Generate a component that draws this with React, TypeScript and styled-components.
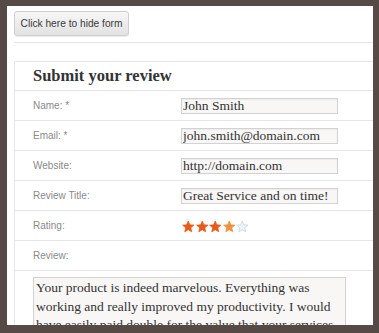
import React from "react";
import styled, { createGlobalStyle } from "styled-components";

const GlobalStyle = createGlobalStyle`
  html, body {
    margin: 0;
    padding: 0;
    background: #554a45;
  }
`;

const serif = `"Liberation Serif", Georgia, "Times New Roman", serif`;
const sans = `"Liberation Sans", Arial, Helvetica, sans-serif`;

const Frame = styled.div`
  margin: 6px 6px 8px 7px;
  height: 319px;
  background: #ffffff;
  overflow: hidden;
`;

const Content = styled.div`
  width: 420px;
  padding: 5px 0 0 7px;
`;

const ToggleButton = styled.button`
  display: block;
  width: 115px;
  height: 25px;
  padding: 0;
  white-space: nowrap;
  font-family: ${sans};
  font-size: 10.2px;
  color: #3a3a3a;
  background: linear-gradient(to bottom, #f7f7f7, #e2e2e2);
  border: 1px solid #cfcfcf;
  border-radius: 3px;
  box-shadow: 0 1px 1px rgba(0, 0, 0, 0.08);
`;

const Divider = styled.div`
  height: 1px;
  margin-top: 6px;
  background: #e6e6e6;
`;

const FormBox = styled.div`
  margin-top: 18px;
  border-top: 1px solid #e6e6e6;
  border-left: 1px solid #e6e6e6;
`;

const Title = styled.h2`
  margin: 0;
  height: 29px;
  padding: 4px 0 0 18px;
  box-sizing: border-box;
  font-family: ${serif};
  font-size: 16.5px;
  font-weight: bold;
  color: #333;
  border-bottom: 1px solid #e6e6e6;
`;

const Row = styled.div`
  display: flex;
  align-items: center;
  height: 29px;
  padding-left: 18px;
  border-bottom: 1px solid #e6e6e6;
`;

const Label = styled.div`
  width: 148px;
  flex-shrink: 0;
  font-family: ${sans};
  font-size: 10px;
  color: #8a8a8a;
`;

const Field = styled.input`
  box-sizing: border-box;
  width: 157px;
  height: 16px;
  padding: 0 1px;
  margin: 0;
  font-family: ${serif};
  font-size: 13.5px;
  color: #333;
  background: #f8f7f5;
  border: 1px solid #d2d2d2;
  box-shadow: inset 0 1px 1px rgba(0, 0, 0, 0.05);
  outline: none;
`;

const Stars = styled.div`
  display: flex;
  gap: 1px;
  margin-left: 1px;
  margin-top: 1px;
`;

const TextBlock = styled.div`
  padding: 6px 0 0 18px;
`;

const ReviewArea = styled.textarea`
  box-sizing: border-box;
  display: block;
  width: 313px;
  height: 80px;
  margin: 0;
  padding: 1px 2px;
  font-family: ${serif};
  font-size: 13.5px;
  line-height: 18.5px;
  color: #333;
  background: #f8f7f5;
  border: 1px solid #d2d2d2;
  resize: none;
  overflow: hidden;
  outline: none;
`;

type StarKind = "full" | "half" | "empty";

function Star({ kind }: { kind: StarKind }) {
  const fill = kind === "full" ? "#e85a1c" : kind === "half" ? "#ef9240" : "#eef3f8";
  const stroke = kind === "empty" ? "#c4d4e2" : fill;
  return (
    <svg width="12.5" height="13" viewBox="0 0 24 24">
      <polygon
        points="12,1.5 15,8.8 22.8,9.4 16.8,14.5 18.7,22.2 12,18 5.3,22.2 7.2,14.5 1.2,9.4 9,8.8"
        fill={fill}
        stroke={stroke}
        strokeWidth="1.5"
        strokeLinejoin="round"
      />
    </svg>
  );
}

const fields = [
  { label: "Name: *", value: "John Smith" },
  { label: "Email: *", value: "john.smith@domain.com" },
  { label: "Website:", value: "http://domain.com" },
  { label: "Review Title:", value: "Great Service and on time!" },
];

const rating: StarKind[] = ["full", "full", "full", "half", "empty"];

export default function App() {
  return (
    <>
      <GlobalStyle />
      <Frame>
        <Content>
          <ToggleButton>Click here to hide form</ToggleButton>
          <Divider />
          <FormBox>
            <Title>Submit your review</Title>
            {fields.map((f) => (
              <Row key={f.label}>
                <Label>{f.label}</Label>
                <Field defaultValue={f.value} readOnly />
              </Row>
            ))}
            <Row>
              <Label>Rating:</Label>
              <Stars>
                {rating.map((k, i) => (
                  <Star key={i} kind={k} />
                ))}
              </Stars>
            </Row>
            <Row>
              <Label>Review:</Label>
            </Row>
            <TextBlock>
              <ReviewArea
                readOnly
                defaultValue="Your product is indeed marvelous. Everything was working and really improved my productivity. I would have easily paid double for the value that your services provide."
              />
            </TextBlock>
          </FormBox>
        </Content>
      </Frame>
    </>
  );
}
